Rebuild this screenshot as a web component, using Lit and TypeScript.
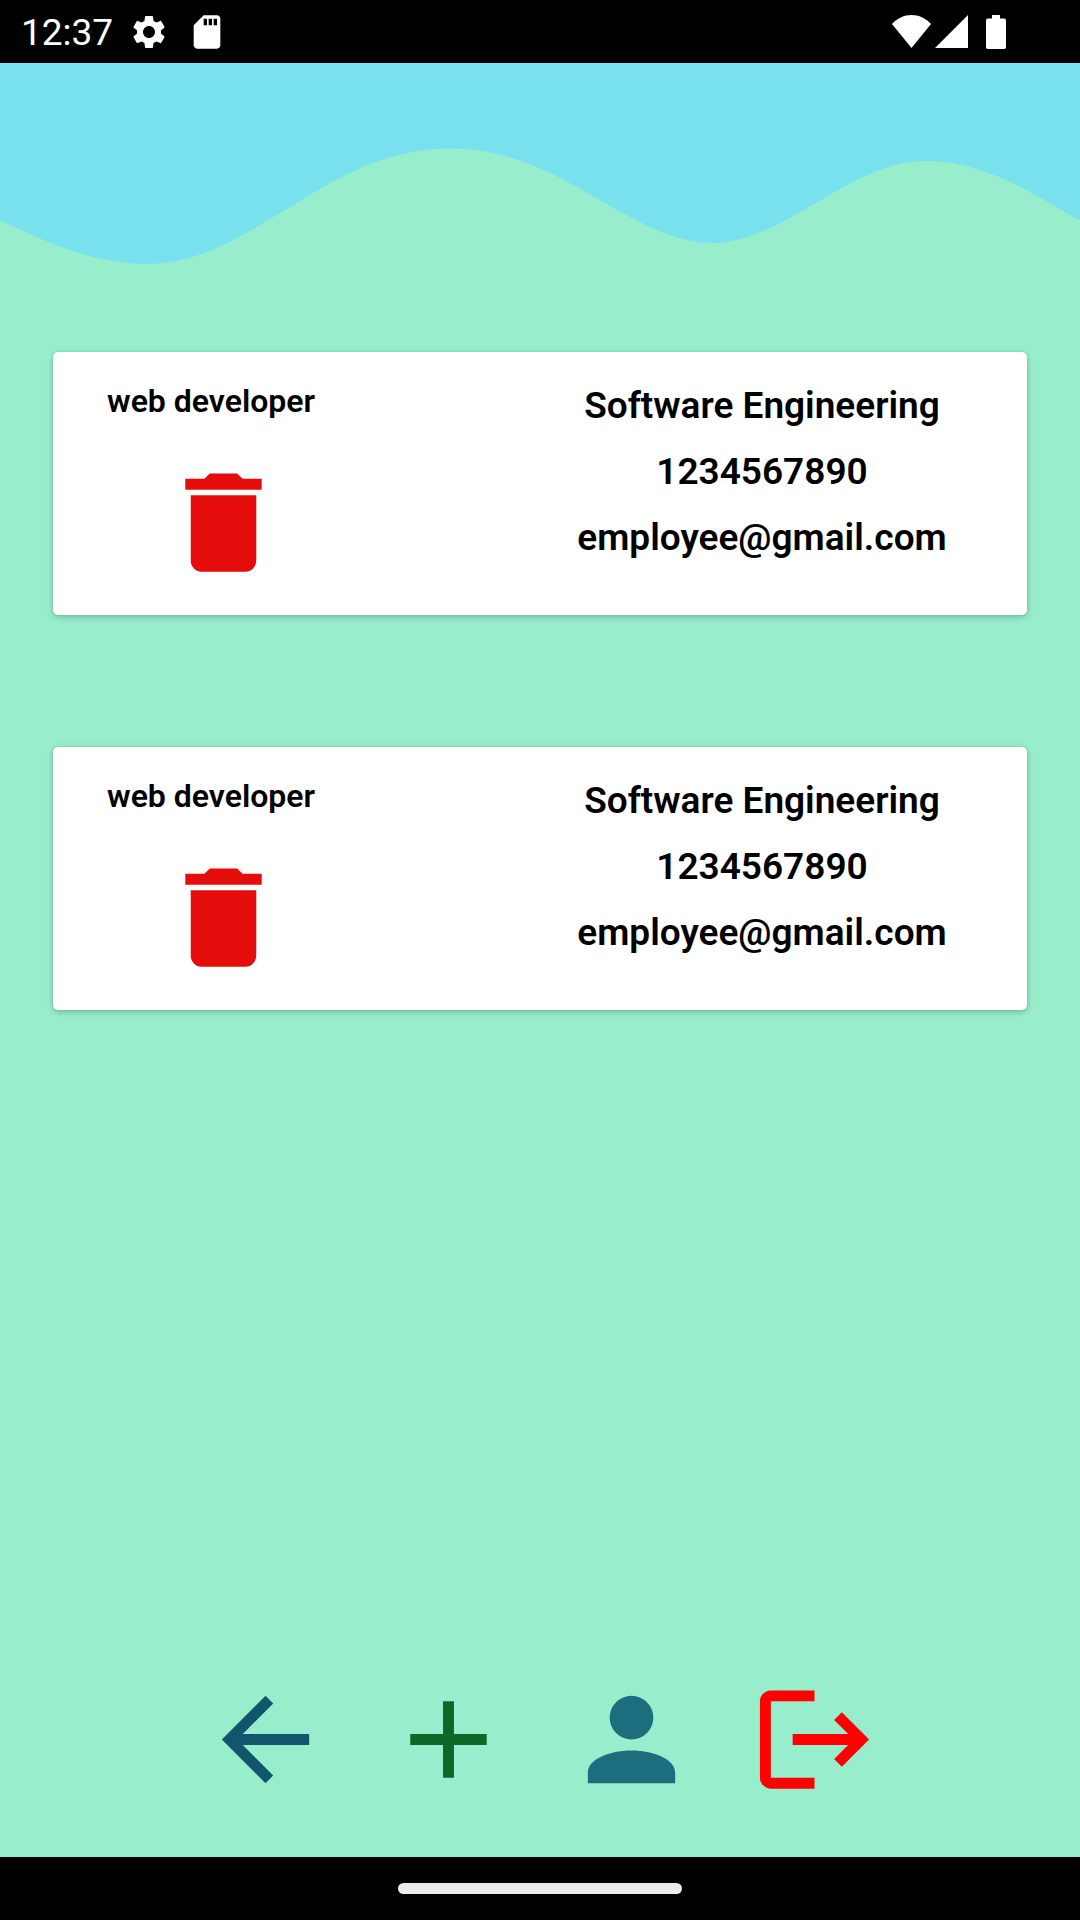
import { LitElement, html, css, svg, nothing } from "lit";
import { customElement, property, state } from "lit/decorators.js";

interface Employee {
  role: string;
  department: string;
  phone: string;
  email: string;
}

@customElement("status-bar")
export class StatusBar extends LitElement {
  static styles = css`
    :host {
      display: block;
    }
    .bar {
      box-sizing: border-box;
      display: flex;
      align-items: center;
      justify-content: space-between;
      height: 63px;
      padding: 0 74px 0 21px;
      background: #000;
      color: #fff;
      font: 400 37px/43px Roboto, sans-serif;
    }
    .group {
      display: flex;
      align-items: center;
    }
    .left {
      gap: 16px;
    }
    .right {
      gap: 4px;
    }
    .clock {
      padding-top: 2px;
    }
    svg {
      display: block;
      fill: currentColor;
    }
    .card {
      margin-left: 2px;
    }
    .battery {
      margin-left: 14px;
    }
  `;

  render() {
    return html`
      <header class="bar">
        <div class="group left">
          <time class="clock">12:37</time>
          <svg width="40" height="40" viewBox="0 0 24 24" aria-hidden="true">
            <path
              d="M19.14 12.94c.04-.3.06-.61.06-.94 0-.32-.02-.64-.07-.94l2.03-1.58c.18-.14.23-.41.12-.61l-1.92-3.32c-.12-.22-.37-.29-.59-.22l-2.39.96c-.5-.38-1.03-.7-1.62-.94l-.36-2.54c-.04-.24-.24-.41-.48-.41h-3.84c-.24 0-.43.17-.47.41l-.36 2.54c-.59.24-1.13.57-1.62.94l-2.39-.96c-.22-.08-.47 0-.59.22L2.74 8.87c-.12.21-.08.47.12.61l2.03 1.58c-.05.3-.09.63-.09.94s.02.64.07.94l-2.03 1.58c-.18.14-.23.41-.12.61l1.92 3.32c.12.22.37.29.59.22l2.39-.96c.5.38 1.03.7 1.62.94l.36 2.54c.05.24.24.41.48.41h3.84c.24 0 .44-.17.47-.41l.36-2.54c.59-.24 1.13-.56 1.62-.94l2.39.96c.22.08.47 0 .59-.22l1.92-3.32c.12-.22.07-.47-.12-.61l-2.01-1.58zM12 15.6c-1.98 0-3.6-1.62-3.6-3.6s1.62-3.6 3.6-3.6 3.6 1.62 3.6 3.6-1.62 3.6-3.6 3.6z"
            />
          </svg>
          <svg class="card" width="40" height="40" viewBox="0 0 24 24" aria-hidden="true">
            <path
              d="M18 2h-8L4.02 8 4 20c0 1.1.9 2 2 2h12c1.1 0 2-.9 2-2V4c0-1.1-.9-2-2-2zm-6 6h-2V4h2v4zm3 0h-2V4h2v4zm3 0h-2V4h2v4z"
            />
          </svg>
        </div>
        <div class="group right">
          <svg width="39" height="33" viewBox="0 0 39 33" aria-hidden="true">
            <path d="M19.5 33 0 9C5 3.400 12 0 19.500 0S34 3.400 39 9z" />
          </svg>
          <svg width="33" height="33" viewBox="0 0 33 33" aria-hidden="true">
            <path d="M0 33 33 0v33z" />
          </svg>
          <svg class="battery" width="20" height="34" viewBox="0 0 20 34" aria-hidden="true">
            <path
              d="M6 0h8v3.500h4a2 2 0 0 1 2 2V32a2 2 0 0 1-2 2H2a2 2 0 0 1-2-2V5.500a2 2 0 0 1 2-2h4z"
            />
          </svg>
        </div>
      </header>
    `;
  }
}

@customElement("employee-card")
export class EmployeeCard extends LitElement {
  @property({ attribute: false }) employee?: Employee;

  static styles = css`
    :host {
      display: block;
    }
    .card {
      box-sizing: border-box;
      display: grid;
      grid-template-columns: 444fr 530fr;
      min-height: 263px;
      padding: 27px 0;
      border-radius: 5px;
      background: #fff;
      box-shadow: 0 2px 6px rgba(0, 0, 0, 0.24), 0 0 2px rgba(0, 0, 0, 0.1);
      color: #000;
      font-family: Roboto, sans-serif;
      font-weight: 600;
    }
    .summary {
      display: flex;
      flex-direction: column;
      align-items: flex-start;
      justify-content: space-between;
      padding-left: 54px;
    }
    .role {
      margin: 0;
      font-size: 32px;
      font-weight: inherit;
      line-height: 44px;
    }
    .remove {
      margin-left: 51px;
      padding: 0;
      border: 0;
      background: none;
      color: #e50d0b;
      cursor: pointer;
    }
    svg {
      display: block;
      fill: currentColor;
    }
    .details {
      display: flex;
      flex-direction: column;
      align-items: center;
      gap: 22px;
      margin: 0;
      padding: 5px 0 0;
      font-size: 37px;
      line-height: 44px;
      list-style: none;
    }
  `;

  private remove() {
    this.dispatchEvent(new CustomEvent("remove", { detail: this.employee }));
  }

  render() {
    const e = this.employee;
    if (!e) return nothing;
    return html`
      <article class="card">
        <div class="summary">
          <h2 class="role">${e.role}</h2>
          <button class="remove" type="button" aria-label="Delete" @click=${this.remove}>
            <svg width="131" height="131" viewBox="0 0 24 24" aria-hidden="true">
              <path
                d="M19 4h-3.500l-1-1h-5l-1 1H5v2h14M6 19a2 2 0 0 0 2 2h8a2 2 0 0 0 2-2V7H6v12z"
              />
            </svg>
          </button>
        </div>
        <ul class="details">
          <li>${e.department}</li>
          <li>${e.phone}</li>
          <li>${e.email}</li>
        </ul>
      </article>
    `;
  }
}

const ACTIONS = [
  {
    label: "Back",
    tone: "back",
    path: "M20 11H7.830l5.590-5.590L12 4l-8 8 8 8 1.410-1.410L7.830 13H20v-2z",
  },
  { label: "Add", tone: "add", path: "M19 13h-6v6h-2v-6H5v-2h6V5h2v6h6v2z" },
  {
    label: "Profile",
    tone: "profile",
    path: "M12 4a4 4 0 0 1 4 4 4 4 0 0 1-4 4 4 4 0 0 1-4-4 4 4 0 0 1 4-4m0 10c4.420 0 8 1.790 8 4v2H4v-2c0-2.210 3.580-4 8-4z",
  },
  {
    label: "Log out",
    tone: "logout",
    path: "M17 7l-1.410 1.410L18.170 11H8v2h10.170l-2.580 2.580L17 17l5-5-5-5M4 5h8V3H4c-1.100 0-2 .9-2 2v14c0 1.100.9 2 2 2h8v-2H4V5z",
  },
];

@customElement("action-bar")
export class ActionBar extends LitElement {
  static styles = css`
    :host {
      display: block;
    }
    .actions {
      display: flex;
      justify-content: center;
      gap: 52px;
      padding-bottom: 52px;
    }
    .action {
      padding: 0;
      border: 0;
      background: none;
      cursor: pointer;
    }
    .back {
      color: #12566e;
    }
    .add {
      color: #0e6629;
    }
    .profile {
      color: #1c6e7e;
    }
    .logout {
      color: #ff0000;
    }
    svg {
      display: block;
      fill: currentColor;
    }
  `;

  render() {
    return html`
      <nav class="actions">
        ${ACTIONS.map(
          (a) => html`
            <button class="action ${a.tone}" type="button" aria-label=${a.label}>
              <svg width="131" height="131" viewBox="0 0 24 24" aria-hidden="true">
                ${svg`<path d=${a.path} />`}
              </svg>
            </button>
          `
        )}
      </nav>
    `;
  }
}

@customElement("app-root")
export class AppRoot extends LitElement {
  @state() private employees: Employee[] = [
    {
      role: "web developer",
      department: "Software Engineering",
      phone: "1234567890",
      email: "employee@gmail.com",
    },
    {
      role: "web developer",
      department: "Software Engineering",
      phone: "1234567890",
      email: "employee@gmail.com",
    },
  ];

  static styles = css`
    :host {
      display: flex;
      flex-direction: column;
      min-height: 100vh;
      background: #98eecc;
    }
    .wave {
      display: block;
      width: 100%;
      height: 263px;
      fill: #79e0ee;
    }
    .list {
      flex: 1;
      display: flex;
      flex-direction: column;
      gap: 132px;
      padding: 26px 53px;
    }
    .system {
      box-sizing: border-box;
      display: flex;
      align-items: center;
      justify-content: center;
      height: 63px;
      background: #000;
    }
    .handle {
      width: 284px;
      height: 11px;
      border-radius: 6px;
      background: #ebebeb;
    }
  `;

  private drop(employee: Employee) {
    this.employees = this.employees.filter((e) => e !== employee);
  }

  render() {
    return html`
      <status-bar></status-bar>
      <svg class="wave" viewBox="0 0 1440 320" preserveAspectRatio="none" aria-hidden="true">
        <path
          d="M0 192L40 208C80 224 160 256 240 240C320 224 400 160 480 128C560 96 640 96 720 128C800 160 880 224 960 218.700C1040 213.300 1120 138.700 1200 122.700C1280 106.700 1360 149.300 1400 170.700L1440 192V0H0Z"
        />
      </svg>
      <main class="list">
        ${this.employees.map(
          (e) => html`
            <employee-card .employee=${e} @remove=${() => this.drop(e)}></employee-card>
          `
        )}
      </main>
      <action-bar></action-bar>
      <footer class="system"><div class="handle"></div></footer>
    `;
  }
}
